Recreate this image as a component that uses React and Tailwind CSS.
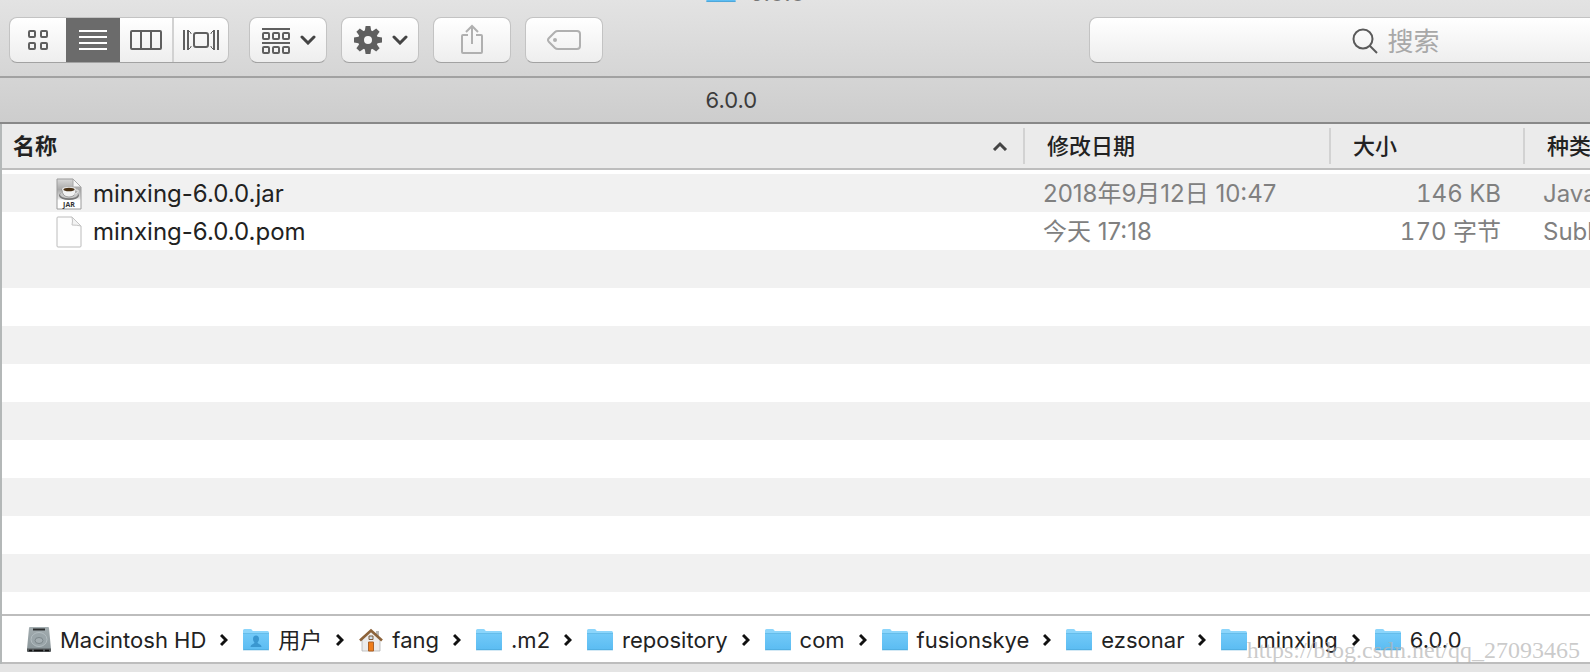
import React, { useState } from 'react';

const FILES = [
  { name: 'minxing-6.0.0.jar', date: '2018年9月12日 10:47', size: '146 KB', kind: 'Java', icon: 'jar' },
  { name: 'minxing-6.0.0.pom', date: '今天 17:18', size: '170 字节', kind: 'Subl', icon: 'blank' },
];

const EMPTY_ROWS = 10;

const PATH = [
  { name: 'Macintosh HD', icon: 'disk' },
  { name: '用户', icon: 'users' },
  { name: 'fang', icon: 'home' },
  { name: '.m2', icon: 'folder' },
  { name: 'repository', icon: 'folder' },
  { name: 'com', icon: 'folder' },
  { name: 'fusionskye', icon: 'folder' },
  { name: 'ezsonar', icon: 'folder' },
  { name: 'minxing', icon: 'folder' },
  { name: '6.0.0', icon: 'folder' },
];

// toolbar icons

const GridIcon = () => (
  <svg width="20" height="20" fill="none" stroke="#5f5f5f" strokeWidth="2">
    <rect x="1" y="1" width="6" height="6" rx="1" />
    <rect x="13" y="1" width="6" height="6" rx="1" />
    <rect x="1" y="13" width="6" height="6" rx="1" />
    <rect x="13" y="13" width="6" height="6" rx="1" />
  </svg>
);

const ListIcon = () => (
  <svg width="28" height="20" stroke="#fff" strokeWidth="2">
    <path d="M0 1h28M0 7h28M0 13h28M0 19h28" />
  </svg>
);

const ColumnsIcon = () => (
  <svg width="32" height="20" fill="none" stroke="#5f5f5f" strokeWidth="2">
    <rect x="1" y="1" width="30" height="18" rx="1" />
    <path d="M11 1v18M21 1v18" />
  </svg>
);

const CoverFlowIcon = () => (
  <svg width="36" height="20" fill="none" stroke="#5f5f5f" strokeWidth="2">
    <path d="M1 0v20M35 0v20M5 0v20M31 0v20" />
    <path d="M6 1l2 2v1M6 19l2-2v-1M30 1l-2 2v1M30 19l-2-2v-1" strokeWidth="1" />
    <rect x="11" y="3" width="14" height="14" rx="2" />
  </svg>
);

const GroupIcon = () => (
  <svg width="28" height="28" viewBox="0 -2 28 28" fill="none" stroke="#5f5f5f" strokeWidth="2">
    <path d="M0 1h28M0 15h28" />
    {[5, 19].map((y) =>
      [1, 11, 21].map((x) => <rect key={`${x}-${y}`} x={x} y={y} width="6" height="6" rx="1" />)
    )}
  </svg>
);

const GearIcon = () => (
  <svg width="28" height="28" viewBox="-14 -14 28 28">
    <circle r="7" fill="none" stroke="#5f5f5f" strokeWidth="6" />
    {[0, 45, 90, 135, 180, 225, 270, 315].map((a) => (
      <path key={a} d="M-3.4-8L-2.4-14H2.4L3.4-8Z" fill="#5f5f5f" transform={`rotate(${a})`} />
    ))}
  </svg>
);

const ChevronDown = () => (
  <svg className="-mr-0.5" width="16" height="10" fill="none" stroke="#444" strokeWidth="3" strokeLinecap="round">
    <path d="M2 2l6 6 6-6" />
  </svg>
);

const ShareIcon = () => (
  <svg width="22" height="32" fill="none" stroke="#b0b0b0" strokeWidth="2">
    <path d="M7 11H2q-1 0-1 1v16q0 1 1 1h18q1 0 1-1V12q0-1-1-1h-5" />
    <path d="M11 20V2M5 8l6-6 6 6" />
  </svg>
);

const TagIcon = () => (
  <svg width="34" height="20" fill="none" stroke="#b0b0b0" strokeWidth="2">
    <path d="M11 1h19q3 0 3 3v12q0 3-3 3H11q-2 0-3-1l-6-6q-2-2 0-4l6-6q1-1 3-1z" />
    <circle cx="8" cy="10" r="2" fill="#b0b0b0" stroke="none" />
  </svg>
);

const SearchIcon = () => (
  <svg width="26" height="26" fill="none" stroke="#5a5a5a" strokeWidth="2">
    <circle cx="11" cy="11" r="9.5" />
    <path d="M17.5 17.5L25 25" />
  </svg>
);

// file and path icons

const JarIcon = () => (
  <svg width="26" height="32" viewBox="0 0 26 32">
    <defs>
      <linearGradient id="jar" x1="0" y1="0" x2="0" y2="1">
        <stop offset="0" stopColor="#d8d8d8" />
        <stop offset="0.35" stopColor="#a9a9a9" />
        <stop offset="0.65" stopColor="#e4e4e4" />
        <stop offset="0.72" stopColor="#fff" />
      </linearGradient>
    </defs>
    <path d="M1 1h16l8 8v22H1z" fill="url(#jar)" stroke="#9b9b9b" />
    <path d="M17 1v8h8z" fill="#f7f7f7" stroke="#a8a8a8" />
    <ellipse cx="13" cy="17.5" rx="10" ry="4.5" fill="#777" />
    <ellipse cx="13" cy="16.5" rx="9" ry="3.8" fill="#c9c9c9" />
    <path d="M6 11q0 8 7 8t7-8z" fill="#f2f2f2" stroke="#777" strokeWidth="0.6" />
    <path d="M20 12q3 0 2 2t-4 2" fill="none" stroke="#ddd" strokeWidth="1.4" />
    <ellipse cx="13" cy="11.3" rx="7" ry="2.4" fill="#eee" />
    <ellipse cx="13" cy="11.5" rx="5.6" ry="1.7" fill="#4a3216" />
    <text x="13" y="29" textAnchor="middle" fontSize="7" fontWeight="700" fill="#333" fontFamily="Open Sans, sans-serif">
      JAR
    </text>
  </svg>
);

const BlankIcon = () => (
  <svg width="26" height="32" viewBox="0 0 26 32">
    <path d="M2 1h14l9 9v20q0 1-1 1H2q-1 0-1-1V2q0-1 1-1z" fill="#fefefe" stroke="#bcbcbc" />
    <path d="M16 1q1 4 0 8 5 0 9 1z" fill="#f3f3f3" stroke="#c4c4c4" />
  </svg>
);

const FolderIcon = ({ user, className = 'h-6 w-7' }) => (
  <svg className={`shrink-0 ${className}`} viewBox="0 0 28 24">
    <defs>
      <linearGradient id="folder" x1="0" y1="0" x2="0" y2="1">
        <stop offset="0" stopColor="#71c9f8" />
        <stop offset="1" stopColor="#5bbcf2" />
      </linearGradient>
    </defs>
    <path d="M1 2.5q0-1.5 1.5-1.5h6q1 0 1.6 1l.6 1h14.8q1.5 0 1.5 1.5V8H1z" fill="#8bd5fb" />
    <path d="M1 6h26v15q0 1-1 1H2q-1 0-1-1z" fill="url(#folder)" />
    <path d="M1 5.5h26" stroke="#5cb6e6" strokeWidth="0.8" />
    <path d="M1 21.8h26" stroke="#4aa4d8" strokeWidth="0.8" />
    {user && (
      <path
        d="M14 7.5c2 0 3 1.5 3 3.5s-1 3-1.5 3.5c0 1.5 4 1.5 4 4.5h-11c0-3 4-3 4-4.5C12 14 11 13 11 11s1-3.5 3-3.5z"
        fill="#3a97d0"
      />
    )}
  </svg>
);

const DiskIcon = () => (
  <svg width="26" height="26" viewBox="0 0 26 26">
    <defs>
      <linearGradient id="disk" x1="0" y1="0" x2="0" y2="1">
        <stop offset="0" stopColor="#a3adb0" />
        <stop offset="1" stopColor="#8c979b" />
      </linearGradient>
    </defs>
    <path d="M3 1q0-1 1-1h18q1 0 1 1l2 21H1z" fill="url(#disk)" />
    <path d="M1 21.5h24V24q0 1-1 1H2q-1 0-1-1z" fill="#54595b" />
    <path d="M7 2.5h12" stroke="#2b2d2e" strokeWidth="2" />
    <ellipse cx="13" cy="12.5" rx="8" ry="7" fill="#9aa5a9" stroke="#b3bdc1" />
    <ellipse cx="13" cy="13.5" rx="4" ry="3" fill="#a4aeb2" stroke="#727d81" strokeWidth="0.8" />
    <path d="M3 23.5h3M8 23.5h9M19 23.5h4" stroke="#111" strokeWidth="1.4" />
  </svg>
);

const HomeIcon = () => (
  <svg width="26" height="24" viewBox="-1 0 26 24">
    <path d="M17 3h3v6h-3z" fill="#b9b9b9" />
    <path d="M3 11l9-8 9 8v12H3z" fill="#ececec" stroke="#b5b5b5" strokeWidth="0.8" />
    <path d="M1 12.5L12 2.5l11 10" fill="none" stroke="#8c6239" strokeWidth="2.6" />
    <path d="M9.5 14h5v9h-5z" fill="#ef7d1a" stroke="#a9622a" />
    <path d="M10 8h4v3.5h-4z" fill="#cfe0ee" stroke="#7d5a3b" />
  </svg>
);

const PathIcon = ({ type }) => {
  if (type === 'disk') return <DiskIcon />;
  if (type === 'home') return <HomeIcon />;
  return <FolderIcon user={type === 'users'} />;
};

const VIEWS = [
  { id: 'icons', label: '图标', icon: GridIcon, width: 'w-[56px]' },
  { id: 'list', label: '列表', icon: ListIcon, width: 'w-[54px]' },
  { id: 'columns', label: '分栏', icon: ColumnsIcon, width: 'w-[54px]' },
  { id: 'cover', label: 'Cover Flow', icon: CoverFlowIcon, width: 'w-[54px]' },
];

const ToolbarButton = ({ label, children }) => (
  <button
    aria-label={label}
    className="flex h-[46px] w-[78px] shrink-0 items-center justify-center gap-2.5 rounded-lg border border-[#c3c3c3] border-b-[#a2a2a2] bg-linear-to-b from-white to-[#eeeeee]"
  >
    {children}
  </button>
);

const Toolbar = () => {
  const [view, setView] = useState('list');

  return (
    <div className="flex h-[73px] shrink-0 items-start overflow-hidden pt-3.5 pl-[9px]">
      <div className="flex h-[46px] shrink-0 overflow-hidden rounded-lg border border-[#c3c3c3] border-b-[#a2a2a2] bg-linear-to-b from-white to-[#eeeeee]">
        {VIEWS.map(({ id, label, icon: Icon, width }) => (
          <button
            key={id}
            aria-label={label}
            onClick={() => setView(id)}
            className={`flex items-center justify-center ${width} ${
              view === id ? 'bg-[#6b6b6b]' : ''
            } ${id === 'columns' ? 'border-r-2 border-[#d2d2d2]' : ''}`}
          >
            <Icon />
          </button>
        ))}
      </div>

      <div className="ml-5 flex gap-3.5">
        <ToolbarButton label="排列">
          <GroupIcon />
          <ChevronDown />
        </ToolbarButton>
        <ToolbarButton label="操作">
          <GearIcon />
          <ChevronDown />
        </ToolbarButton>
        <ToolbarButton label="共享">
          <ShareIcon />
        </ToolbarButton>
        <ToolbarButton label="标记">
          <TagIcon />
        </ToolbarButton>
      </div>

      {/* the search field runs past the right edge of the window */}
      <label className="-mr-28 ml-auto flex h-[46px] w-[613px] shrink-0 items-center justify-center gap-2.5 rounded-lg border border-[#c3c3c3] border-b-[#a2a2a2] bg-linear-to-b from-white to-[#eeeeee] pt-0.5">
        <SearchIcon />
        <input
          type="text"
          aria-label="搜索"
          placeholder="搜索"
          className="w-[52px] bg-transparent text-[26px] outline-none placeholder:text-[#a8a8a8]"
        />
      </label>
    </div>
  );
};

const FileTable = () => (
  <table className="w-full table-fixed border-collapse text-left whitespace-nowrap">
    <colgroup>
      <col />
      <col className="w-[306px]" />
      <col className="w-[194px]" />
      <col className="w-[67px]" />
    </colgroup>
    <thead>
      <tr className="h-[45px] border-b-2 border-[#bdbdbd] bg-[#ebebeb] text-[22px] text-[#222]">
        <th className="p-0 font-bold">
          <button className="flex w-full items-center justify-between pr-[15px] pl-[11px]">
            名称
            <svg width="16" height="10" fill="none" stroke="#444" strokeWidth="3">
              <path d="M2 9l6-6 6 6" />
            </svg>
          </button>
        </th>
        {['修改日期', '大小', '种类'].map((title) => (
          <th key={title} className="p-0 font-medium">
            <div className="flex h-9 items-center border-l-2 border-[#d2d2d2] pl-[22px]">{title}</div>
          </th>
        ))}
      </tr>
    </thead>
    <tbody className="text-2xl">
      <tr className="h-[5px]" aria-hidden="true">
        <td colSpan={4} className="p-0" />
      </tr>
      {FILES.map((file) => (
        <tr key={file.name} className="h-[38px] text-[#808080] even:bg-[#f1f1f1]">
          <td className="p-0 pt-0.5 text-[#222]">
            <div className="flex items-center gap-[11px] pl-[54px]">
              {file.icon === 'jar' ? <JarIcon /> : <BlankIcon />}
              {file.name}
            </div>
          </td>
          <td className="p-0 pt-0.5 pl-5">{file.date}</td>
          <td className="p-0 pt-0.5 pr-[22px] text-right tabular-nums">{file.size}</td>
          <td className="overflow-hidden p-0 pt-0.5 pl-5">{file.kind}</td>
        </tr>
      ))}
      {Array.from({ length: EMPTY_ROWS }, (_, i) => (
        <tr key={i} className="h-[38px] even:bg-[#f1f1f1]">
          <td colSpan={4} className="p-0" />
        </tr>
      ))}
    </tbody>
  </table>
);

const PathBar = () => (
  <nav className="relative flex h-[50px] shrink-0 items-center border-y-2 border-[#bdbdbd] bg-white pt-0.5 pl-6 text-[22px] whitespace-nowrap text-[#222]">
    {PATH.map((item, i) => (
      <React.Fragment key={item.name}>
        {i > 0 && (
          <svg className="mx-3.5 shrink-0" width="8" height="14" fill="none" stroke="#111" strokeWidth="3">
            <path d="M1 2l5 5-5 5" />
          </svg>
        )}
        <a href="#" className="flex items-center gap-2">
          <PathIcon type={item.icon} />
          {item.name}
        </a>
      </React.Fragment>
    ))}
    <span className="pointer-events-none absolute right-2.5 bottom-0 font-['Liberation_Serif',serif] text-2xl leading-6 text-[#b4b4b4]/70">
      https://blog.csdn.net/qq_27093465
    </span>
  </nav>
);

export default function App() {
  return (
    <div className="flex h-screen flex-col overflow-hidden bg-[#e4e4e4] font-['Inter','Noto_Sans_CJK_SC',sans-serif]">
      <header className="flex shrink-0 flex-col border-b-2 border-[#888888] bg-linear-to-b from-[#e3e3e3] to-[#cdcdcd]">
        {/* bottom edge of the window title */}
        <div className="flex h-[3px] w-[95%] items-end justify-center gap-3 overflow-hidden">
          <FolderIcon className="-mb-px h-[27px] w-8" />
          <span className="-mb-1 h-7 text-2xl leading-7 text-[#777]">6.0.0</span>
        </div>
        <Toolbar />
        <div className="flex h-[46px] items-center border-t-2 border-[#a2a2a2]">
          <h1 className="w-[92%] text-center text-[22px] text-[#3c3c3c]">6.0.0</h1>
        </div>
      </header>
      <main className="flex min-h-0 flex-1 flex-col border-l-2 border-[#b4b8b8] bg-white">
        <div className="min-h-0 flex-1 overflow-hidden">
          <FileTable />
        </div>
        <PathBar />
      </main>
      <footer className="h-2 shrink-0" />
    </div>
  );
}
